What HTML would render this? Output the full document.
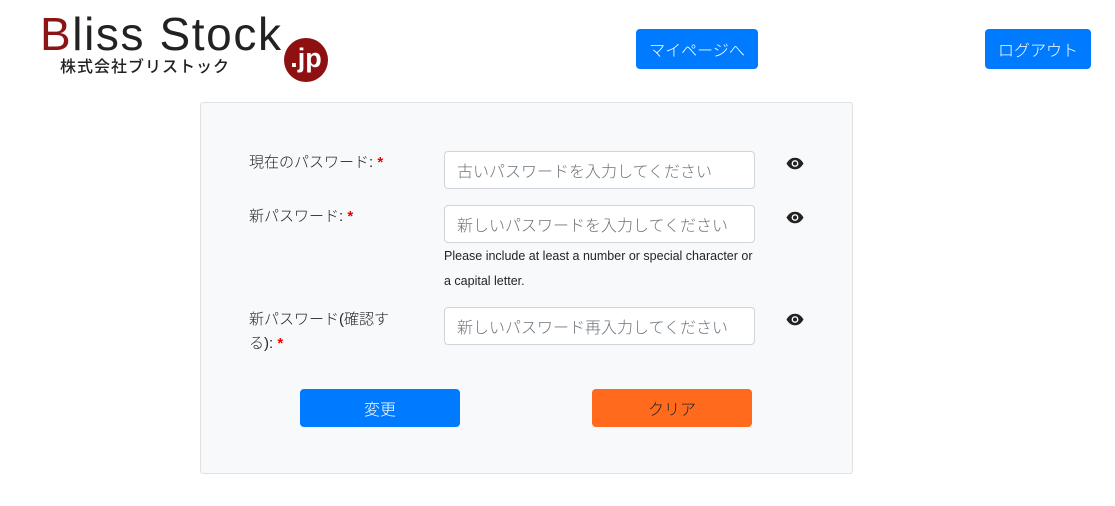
<!DOCTYPE html>
<html><head><meta charset="utf-8"><style>
*{box-sizing:border-box}
body{margin:0;width:1115px;height:506px;background:#fff;font-family:"Liberation Sans","Noto Sans CJK JP",sans-serif;color:#212529;position:relative;overflow:hidden}
.abs{position:absolute}
.btn{position:absolute;background:#007bff;color:#fff;border-radius:4px;font-size:16px;line-height:20px;font-weight:300;display:flex;align-items:center;justify-content:center;padding-top:6px}
.card{position:absolute;left:200px;top:102px;width:653px;height:372px;background:#f8f9fa;border:1px solid #dfe1e3;border-radius:3px}
.lbl{position:absolute;font-size:15px;line-height:24px;color:#212529;font-weight:300}
.req{color:#e00;font-weight:bold}
.inp{position:absolute;left:444px;width:311px;height:38px;background:#fff;border:1px solid #ced4da;border-radius:4px;font-size:16px;line-height:20px;color:#6c757d;padding:11px 12px 0;white-space:nowrap;font-weight:300}
.eye{position:absolute;left:786px}
.help{position:absolute;left:444px;font-size:12.5px;line-height:25px;color:#212529}
</style></head><body>
<div class="abs" style="left:40px;top:6px;font-size:46px;line-height:56px;color:#222;letter-spacing:1.6px;font-weight:300"><span style="color:#8b1515">B</span>liss Stock</div>
<div class="abs" style="left:60px;top:53px;font-size:16px;font-weight:500;color:#222;letter-spacing:1px">株式会社ブリストック</div>
<div class="abs" style="left:284px;top:38px;width:44px;height:44px;border-radius:50%;background:#8e1010;color:#fff;font-size:27px;font-weight:bold;text-align:center;line-height:40px">.jp</div>
<div class="btn" style="left:636px;top:29px;width:122px;height:40px">マイページへ</div>
<div class="btn" style="left:985px;top:29px;width:106px;height:40px">ログアウト</div>
<div class="card"></div>
<div class="lbl" style="left:249px;top:151px">現在のパスワード: <span class="req">*</span></div>
<div class="inp" style="top:151px">古いパスワードを入力してください</div>
<div class="lbl" style="left:249px;top:205px">新パスワード: <span class="req">*</span></div>
<div class="inp" style="top:205px">新しいパスワードを入力してください</div>
<div class="help" style="top:244px">Please include at least a number or special character or<br>a capital letter.</div>
<div class="lbl" style="left:249px;top:308px;width:160px">新パスワード(確認する): <span class="req">*</span></div>
<div class="inp" style="top:307px">新しいパスワード再入力してください</div>
<svg class="eye" style="top:156px" width="18" height="15" viewBox="0 0 18 14"><path d="M0.5 7C3 2.5 6 1.2 9 1.2S15 2.5 17.5 7C15 11.5 12 12.8 9 12.8S3 11.5 0.5 7Z" fill="#222"/><circle cx="9" cy="7" r="3.4" fill="#fff"/><circle cx="9" cy="7" r="2" fill="#222"/></svg>
<svg class="eye" style="top:210px" width="18" height="15" viewBox="0 0 18 14"><path d="M0.5 7C3 2.5 6 1.2 9 1.2S15 2.5 17.5 7C15 11.5 12 12.8 9 12.8S3 11.5 0.5 7Z" fill="#222"/><circle cx="9" cy="7" r="3.4" fill="#fff"/><circle cx="9" cy="7" r="2" fill="#222"/></svg>
<svg class="eye" style="top:312px" width="18" height="15" viewBox="0 0 18 14"><path d="M0.5 7C3 2.5 6 1.2 9 1.2S15 2.5 17.5 7C15 11.5 12 12.8 9 12.8S3 11.5 0.5 7Z" fill="#222"/><circle cx="9" cy="7" r="3.4" fill="#fff"/><circle cx="9" cy="7" r="2" fill="#222"/></svg>
<div class="btn" style="left:300px;top:389px;width:160px;height:38px">変更</div>
<div class="btn" style="left:592px;top:389px;width:160px;height:38px;background:#ff6a1c;color:#222">クリア</div>
</body></html>
